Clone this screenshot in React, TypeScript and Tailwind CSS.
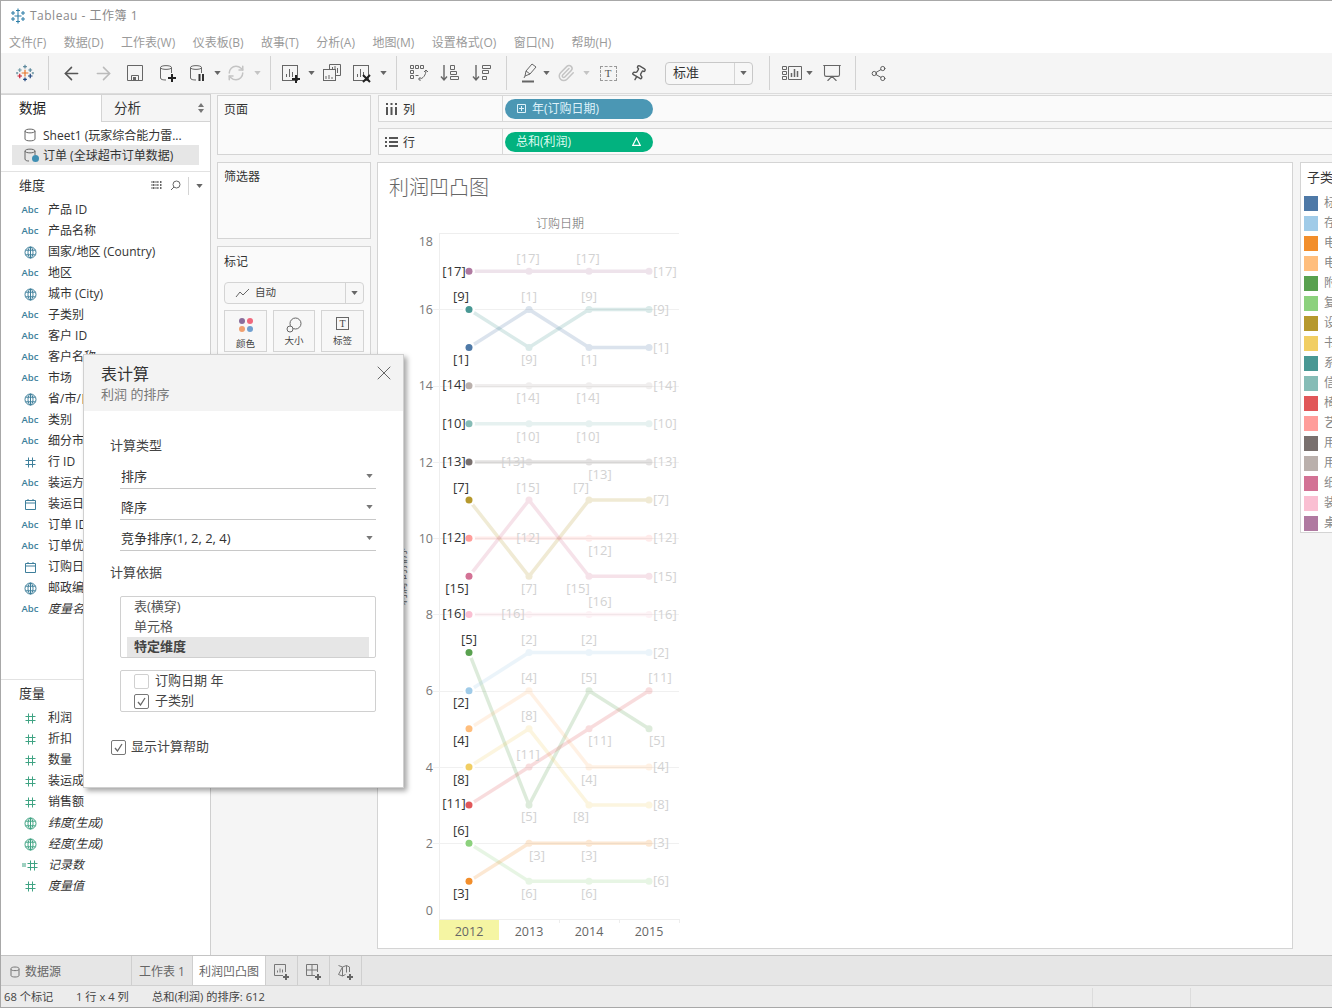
import { ArrowLeft, ArrowRight, Paperclip, Pin, Presentation, RefreshCw, Share2, X as CloseIcon } from "lucide-react"
import type { ReactNode } from "react"

const Caret = ({ color = "#666" }: { color?: string }) => (
  <svg width="7" height="4" viewBox="0 0 8 5" className="shrink-0"><path d="M0 0h8L4 5z" fill={color} /></svg>
)

const Cyl = ({ children, x = 0 }: { children?: ReactNode; x?: number }) => (
  <svg width="20" height="20" viewBox="0 0 20 20" fill="none" style={{ marginLeft: x }}>
    <path d="M2.5 4.5C2.5 2 13.5 2 13.5 4.5V10M2.5 4.5C2.5 7 13.5 7 13.5 4.5M2.5 4.5V15C2.5 16.5 5 17 8 17" stroke="#666" />
    {children}
  </svg>
)

const BlackPlus = ({ x, y }: { x: number; y: number }) => (
  <path d={`M${x - 4} ${y}h8M${x} ${y - 4}v8`} stroke="#222" strokeWidth="2" />
)

const Sheet = ({ children }: { children?: ReactNode }) => (
  <svg width="22" height="22" viewBox="0 0 22 22" fill="none" className="shrink-0">
    <rect x="2.5" y="3.5" width="15" height="15" stroke="#666" />
    <path d="M6.5 15v-3M9.5 15V7M12.5 15v-5" stroke="#666" />
    {children}
  </svg>
)

const TableauLogo = () => {
  const crosses: [number, number, number, string][] = [
    [12, 12, 4.5, "#e8762b"],
    [12, 3.5, 2.5, "#5b879b"],
    [12, 20.5, 2.5, "#1f447e"],
    [5, 8, 2.5, "#7099a6"],
    [19, 8, 2.5, "#59879b"],
    [5, 16, 3, "#c72035"],
    [19, 16, 3, "#1f447e"],
    [1.5, 12, 1.5, "#7099a6"],
    [22.5, 12, 1.5, "#7099a6"],
  ]
  return (
    <svg width="18" height="18" viewBox="0 0 24 24">
      {crosses.map(([x, y, s, c]) => (
        <path key={`${x}-${y}`} d={`M${x - s} ${y}h${2 * s}M${x} ${y - s}v${2 * s}`} stroke={c} strokeWidth="1.6" />
      ))}
    </svg>
  )
}

const TitleLogo = () => {
  const pts = [[8, 8, 3.5], [8, 2.5, 2], [8, 13.5, 2], [3, 5, 2], [13, 5, 2], [3, 11, 2], [13, 11, 2]]
  return (
    <svg width="16" height="16" viewBox="0 0 16 16">
      {pts.map(([x, y, s]) => (
        <path key={`${x}-${y}`} d={`M${x - s} ${y}h${2 * s}M${x} ${y - s}v${2 * s}`} stroke="#2f7fa8" strokeWidth="1.1" />
      ))}
    </svg>
  )
}

// toolbar cell, width is what keeps the icons on their columns
const Cell = ({ w, children }: { w: string; children: ReactNode }) => (
  <div className={`${w} h-full flex items-center justify-center shrink-0`}>{children}</div>
)

const Sep = () => <div className="w-px h-[34px] bg-[#d2d2d2] shrink-0" />

function Toolbar() {
  return (
    <div className="h-[41px] bg-[#f5f5f5] border-b border-[#dcdcdc] flex items-center shrink-0">
      <Cell w="w-[47px]"><TableauLogo /></Cell>
      <Sep />
      <div className="w-[6px]" />
      <Cell w="w-[32px]"><ArrowLeft size={21} color="#555" strokeWidth={1.8} /></Cell>
      <Cell w="w-[32px]"><ArrowRight size={21} color="#bbb" strokeWidth={1.8} /></Cell>
      <Cell w="w-[32px]">
        <svg width="18" height="18" viewBox="0 0 18 18" fill="none">
          <path d="M1.5 1.5h15v15h-15zM5.5 16.5v-5h7v5" stroke="#666" />
          <rect x="7" y="13" width="3" height="3" fill="#666" />
        </svg>
      </Cell>
      <Cell w="w-[32px]"><Cyl x={2}><BlackPlus x={14} y={15} /></Cyl></Cell>
      <Cell w="w-[28px]"><Cyl x={2}><path d="M11.5 11v7M15 11v7" stroke="#333" strokeWidth="2" /></Cyl></Cell>
      <Cell w="w-[12px]"><Caret /></Cell>
      <Cell w="w-[26px]"><RefreshCw size={18} color="#c4c4c4" /></Cell>
      <Cell w="w-[16px]"><Caret color="#c4c4c4" /></Cell>
      <div className="w-[5px]" />
      <Sep />
      <Cell w="w-[40px]"><Sheet><BlackPlus x={16} y={17} /></Sheet></Cell>
      <Cell w="w-[0px]"><Caret /></Cell>
      <Cell w="w-[42px]">
        <svg width="20" height="20" viewBox="0 0 20 20" fill="none">
          <path d="M7.5 6V1.5h11v11H14" stroke="#666" />
          <rect x="1.5" y="6.5" width="12" height="11" stroke="#666" fill="#f5f5f5" />
          <path d="M10.5 4v2M13 3v3M15.5 5v5M4 16v-3M7 16v-4M10 16v-2" stroke="#666" />
        </svg>
      </Cell>
      <Cell w="w-[18px]"><Sheet><path d="M12 13l7 7M19 13l-7 7" stroke="#222" strokeWidth="2" /></Sheet></Cell>
      <Cell w="w-[24px]"><Caret /></Cell>
      <div className="w-px" />
      <Sep />
      <Cell w="w-[42px]">
        <svg width="20" height="20" viewBox="0 0 20 20" fill="none" stroke="#666">
          <path d="M2.5 2.5h3v3h-3zM7.5 2.5h3v3h-3zM12.5 2.5h3v3h-3zM2.5 7.5h3v3h-3zM2.5 12.5h3v3h-3zM7.5 12.5h3" />
          <path d="M18 7c0 5-3 9-7 9M16 9l2-2 2 2M12.5 14l-2 2 2 2" />
        </svg>
      </Cell>
      <Cell w="w-[22px]">
        <svg width="20" height="20" viewBox="0 0 20 20" fill="none" stroke="#666">
          <path d="M4 2v15M1 13.5l3 3.5 3-3.5" strokeWidth="1.4" />
          <path d="M10.5 2.5h4v4h-4zM10.5 8.5h6v3h-6zM10.5 13.5h8v3h-8z" />
        </svg>
      </Cell>
      <div className="w-[10px]" />
      <Cell w="w-[22px]">
        <svg width="20" height="20" viewBox="0 0 20 20" fill="none" stroke="#666">
          <path d="M4 2v15M1 13.5l3 3.5 3-3.5" strokeWidth="1.4" />
          <path d="M10.5 2.5h8v3h-8zM10.5 7.5h6v3h-6zM10.5 13.5h4v3h-4z" />
        </svg>
      </Cell>
      <div className="w-[13px]" />
      <Sep />
      <div className="w-[7px]" />
      <Cell w="w-[30px]">
        <svg width="20" height="22" viewBox="0 0 20 22" fill="none">
          <path d="M6 14l1-5 6-7 4 3-6 7z M7 9l4 3 M6 14l-1 2" stroke="#666" />
          <path d="M3 19.5h12" stroke="#666" strokeWidth="2" />
        </svg>
      </Cell>
      <Cell w="w-[4px]"><Caret /></Cell>
      <Cell w="w-[36px]"><Paperclip size={18} color="#c4c4c4" /></Cell>
      <Cell w="w-[4px]"><Caret color="#c4c4c4" /></Cell>
      <Cell w="w-[40px]">
        <div className="w-[17px] h-[15px] border border-dashed border-[#999] flex items-center justify-center text-[11px] leading-none text-[#555] font-['Liberation_Serif',serif]">T</div>
      </Cell>
      <Cell w="w-[20px]"><Pin size={17} color="#555" className="rotate-[30deg]" /></Cell>
      <div className="w-[17px]" />
      <div className="w-[88px] h-[23px] border border-[#c8c8c8] rounded-sm flex items-center bg-[#f7f7f7] shrink-0">
        <span className="flex-1 pl-[7px] text-[13px] text-[#333]">标准</span>
        <div className="w-[18px] h-full border-l border-[#d4d4d4] flex items-center justify-center"><Caret /></div>
      </div>
      <div className="w-[16px]" />
      <Sep />
      <div className="w-[6px]" />
      <Cell w="w-[32px]">
        <svg width="20" height="16" viewBox="0 0 20 16" fill="none" stroke="#666">
          <path d="M.5 1.5h4v3h-4zM.5 6.5h4v3h-4zM.5 11.5h4v3h-4zM6.5 1.5h13v13h-13z" />
          <path d="M9.5 12V8M12.5 12V4M15.5 12V6" strokeWidth="1.5" />
        </svg>
      </Cell>
      <Cell w="w-[2px]"><Caret /></Cell>
      <Cell w="w-[44px]"><Presentation size={20} color="#666" strokeWidth={1.3} /></Cell>
      <div className="w-px" />
      <Sep />
      <Cell w="w-[44px]"><Share2 size={17} color="#555" strokeWidth={1.3} /></Cell>
    </div>
  )
}

const Globe = ({ color }: { color: string }) => (
  <svg width="13" height="13" viewBox="0 0 13 13" fill="none" stroke={color}>
    <circle cx="6.5" cy="6.5" r="5.5" />
    <ellipse cx="6.5" cy="6.5" rx="2.5" ry="5.5" />
    <path d="M1.5 4.2h10M1.5 8.8h10M6.5 1v11" />
  </svg>
)

const Hash = ({ color }: { color: string }) => (
  <svg width="11" height="11" viewBox="0 0 11 11" fill="none" stroke={color}>
    <path d="M3.5 .5v10M7.5 .5v10M.5 3.5h10M.5 7.5h10" />
  </svg>
)

const Cal = () => (
  <svg width="11" height="11" viewBox="0 0 11 11" fill="none" stroke="#3e7f9b">
    <path d="M.5 1.5h10v9H.5zM.5 4h10M3 0v2M8 0v2" />
  </svg>
)

type Kind = "abc" | "globe" | "hash" | "cal"

const dims: [Kind, string, boolean?][] = [
  ["abc", "产品 ID"],
  ["abc", "产品名称"],
  ["globe", "国家/地区 (Country)"],
  ["abc", "地区"],
  ["globe", "城市 (City)"],
  ["abc", "子类别"],
  ["abc", "客户 ID"],
  ["abc", "客户名称"],
  ["abc", "市场"],
  ["globe", "省/市/自治区"],
  ["abc", "类别"],
  ["abc", "细分市场"],
  ["hash", "行 ID"],
  ["abc", "装运方式"],
  ["cal", "装运日期"],
  ["abc", "订单 ID"],
  ["abc", "订单优先级"],
  ["cal", "订购日期"],
  ["globe", "邮政编码"],
  ["abc", "度量名称", true],
]

const measures: ["hash" | "globe" | "count", string, boolean?][] = [
  ["hash", "利润"],
  ["hash", "折扣"],
  ["hash", "数量"],
  ["hash", "装运成本"],
  ["hash", "销售额"],
  ["globe", "纬度(生成)", true],
  ["globe", "经度(生成)", true],
  ["count", "记录数", true],
  ["hash", "度量值", true],
]

const Field = ({ icon, name, italic }: { icon: ReactNode; name: string; italic?: boolean }) => (
  <div className="h-[21px] flex items-center pl-[17px] pt-px shrink-0">
    <div className="w-[24px] flex justify-center mr-[6px]">{icon}</div>
    <span className={`text-[12px] text-[#333] whitespace-nowrap ${italic ? "italic" : ""}`}>{name}</span>
  </div>
)

function DataPanel() {
  return (
    <div className="w-[210px] bg-white border-r border-[#cfcfcf] flex flex-col shrink-0">
      <div className="h-[28px] flex shrink-0">
        <div className="w-[101px] border-t border-r border-[#d4d4d4] flex items-center pl-[18px] text-[13.5px] text-[#222]">数据</div>
        <div className="flex-1 bg-[#f5f5f5] border-t border-b border-[#d4d4d4] flex items-center pl-[12px] text-[13.5px] text-[#333] relative">
          分析
          <div className="ml-auto mr-[6px] flex flex-col gap-[2px]">
            <svg width="6" height="4" viewBox="0 0 6 4"><path d="M3 0l3 4H0z" fill="#777" /></svg>
            <svg width="6" height="4" viewBox="0 0 6 4"><path d="M0 0h6L3 4z" fill="#777" /></svg>
          </div>
        </div>
      </div>
      <div className="pt-[3px] pb-[6px] border-b border-[#e2e2e2] shrink-0">
        <div className="h-[20px] flex items-center pl-[23px]">
          <svg width="12" height="14" viewBox="0 0 12 14" fill="none" stroke="#666"><path d="M1 3c0-2.500 10-2.500 10 0v8c0 2.500-10 2.500-10 0zM1 3c0 2.500 10 2.500 10 0" /></svg>
          <span className="ml-[7px] pt-[2px] text-[12px] text-[#333] whitespace-nowrap">Sheet1 (玩家综合能力雷...</span>
        </div>
        <div className="h-[20px] mx-[11px] w-[187px] bg-[#e6e6e6] flex items-center pl-[12px] relative">
          <svg width="12" height="14" viewBox="0 0 12 14" fill="none" stroke="#666"><path d="M1 3c0-2.500 10-2.500 10 0v4M1 3c0 2.500 10 2.500 10 0M1 3v8c0 1.500 2 2 4 2" /></svg>
          <div className="absolute left-[20px] top-[10px] w-[7px] h-[7px] rounded-full bg-[#3f8fb3]" />
          <span className="ml-[7px] pt-[2px] text-[12px] text-[#333] whitespace-nowrap">订单 (全球超市订单数据)</span>
        </div>
      </div>
      <div className="h-[27px] flex items-center pl-[18px] shrink-0">
        <span className="text-[13px] text-[#333]">维度</span>
        <svg className="ml-auto" width="12" height="9" viewBox="0 0 12 9" stroke="#666"><path d="M0 1h12M0 4h12M0 7h12M2.500 0v9M6 0v9M9.500 0v9" strokeDasharray="2 1" /></svg>
        <svg className="ml-[7px]" width="11" height="11" viewBox="0 0 11 11" fill="none" stroke="#666"><circle cx="6.500" cy="4.500" r="3.500" /><path d="M4 7l-3 3" /></svg>
        <div className="w-px h-[18px] bg-[#d4d4d4] ml-[7px]" />
        <div className="mx-[7px] flex"><Caret /></div>
      </div>
      {dims.map(([k, name, italic]) => (
        <Field
          key={name}
          name={name}
          italic={italic}
          icon={
            k === "abc" ? (
              <span className="text-[9.5px] leading-none text-[#3e7f9b] font-semibold">Abc</span>
            ) : k === "globe" ? (
              <Globe color="#3e7f9b" />
            ) : k === "hash" ? (
              <Hash color="#3e7f9b" />
            ) : (
              <Cal />
            )
          }
        />
      ))}
      <div className="h-[61px] border-b border-[#e2e2e2] shrink-0" />
      <div className="h-[27px] flex items-center pl-[18px] text-[13px] text-[#333] shrink-0">度量</div>
      {measures.map(([k, name, italic]) => (
        <Field
          key={name}
          name={name}
          italic={italic}
          icon={
            k === "globe" ? (
              <Globe color="#3fa383" />
            ) : k === "hash" ? (
              <Hash color="#3fa383" />
            ) : (
              <span className="flex items-center gap-px">
                <svg width="4" height="4" viewBox="0 0 4 4" stroke="#3fa383"><path d="M0 1h4M0 3h4" /></svg>
                <Hash color="#3fa383" />
              </span>
            )
          }
        />
      ))}
    </div>
  )
}

function MiddleColumn() {
  return (
    <div className="w-[166px] bg-[#f5f5f5] px-[6px] pt-px flex flex-col gap-[7px] shrink-0">
      <div className="h-[60px] bg-[#fafafa] border border-[#d4d4d4] px-[6px] py-[5px] text-[12px] text-[#333]">页面</div>
      <div className="h-[77px] bg-[#fafafa] border border-[#d4d4d4] px-[6px] py-[5px] text-[12px] text-[#333]">筛选器</div>
      <div className="h-[400px] bg-[#fafafa] border border-[#d4d4d4] px-[6px] pt-[6px]">
        <div className="text-[12px] text-[#333] leading-[18px]">标记</div>
        <div className="mt-[11px] h-[22px] border border-[#d4d4d4] rounded-sm bg-[#f7f7f7] flex items-center">
          <svg className="ml-[10px]" width="15" height="10" viewBox="0 0 15 10" fill="none" stroke="#666"><path d="M1 9l4-5 3 3 6-6" /></svg>
          <span className="ml-[5px] flex-1 text-[10.5px] text-[#444]">自动</span>
          <div className="w-[18px] h-full border-l border-[#d4d4d4] flex items-center justify-center"><Caret /></div>
        </div>
        <div className="mt-[6px] flex justify-between">
          <div className="w-[43px] h-[42px] border border-[#d4d4d4] bg-[#f7f7f7] flex flex-col items-center pt-[7px]">
            <div className="grid grid-cols-2 gap-[2px]">
              <div className="w-[6px] h-[6px] rounded-full bg-[#8a6d9b]" />
              <div className="w-[6px] h-[6px] rounded-full bg-[#f0687c]" />
              <div className="w-[6px] h-[6px] rounded-full bg-[#f0a070]" />
              <div className="w-[6px] h-[6px] rounded-full bg-[#6f9fd0]" />
            </div>
            <span className="mt-[6px] text-[9.5px] leading-[12px] text-[#444]">颜色</span>
          </div>
          <div className="w-[42px] h-[42px] border border-[#d4d4d4] bg-[#f7f7f7] flex flex-col items-center pt-[6px]">
            <svg width="16" height="16" viewBox="0 0 16 16" fill="none" stroke="#666"><circle cx="9.500" cy="6.500" r="5.500" fill="#f7f7f7" /><circle cx="4" cy="12" r="3" fill="#f7f7f7" /></svg>
            <span className="mt-[2px] text-[9.5px] leading-[12px] text-[#444]">大小</span>
          </div>
          <div className="w-[43px] h-[42px] border border-[#d4d4d4] bg-[#f7f7f7] flex flex-col items-center pt-[6px]">
            <div className="w-[13px] h-[13px] border border-[#666] flex items-center justify-center text-[10px] leading-none text-[#444] font-['Liberation_Serif',serif]">T</div>
            <span className="mt-[5px] text-[9.5px] leading-[12px] text-[#444]">标签</span>
          </div>
        </div>
      </div>
    </div>
  )
}

// ------- chart data: ranks per year, label centre per year
type P = [number, number]
type Series = { n: number; color: string; v: number[]; l: P[] }

const R = 665
const S = 661
const series: Series[] = [
  { n: 17, color: "#b07aa1", v: [17, 17, 17, 17], l: [[454, 272], [528, 259], [588, 259], [R, 272]] },
  { n: 9, color: "#499894", v: [16, 15, 16, 16], l: [[461, 297], [529, 360], [589, 297], [S, 310]] },
  { n: 1, color: "#4e79a7", v: [15, 16, 15, 15], l: [[461, 360], [529, 297], [589, 360], [S, 348]] },
  { n: 14, color: "#bab0ac", v: [14, 14, 14, 14], l: [[454, 385], [528, 398], [588, 398], [R, 386]] },
  { n: 10, color: "#86bcb6", v: [13, 13, 13, 13], l: [[454, 424], [528, 437], [588, 437], [R, 424]] },
  { n: 13, color: "#79706e", v: [12, 12, 12, 12], l: [[454, 462], [513, 462], [600, 475], [R, 462]] },
  { n: 7, color: "#b6992d", v: [11, 9, 11, 11], l: [[461, 488], [529, 589], [581, 488], [S, 500]] },
  { n: 12, color: "#ff9d9a", v: [10, 10, 10, 10], l: [[454, 538], [528, 538], [600, 551], [R, 538]] },
  { n: 15, color: "#d37295", v: [9, 11, 9, 9], l: [[457, 589], [528, 488], [578, 589], [R, 577]] },
  { n: 16, color: "#fabfd2", v: [8, 8, 8, 8], l: [[454, 614], [513, 614], [600, 602], [R, 615]] },
  { n: 5, color: "#59a14f", v: [7, 3, 6, 5], l: [[469, 640], [529, 817], [589, 678], [657, 741]] },
  { n: 2, color: "#a0cbe8", v: [6, 7, 7, 7], l: [[461, 703], [529, 640], [589, 640], [S, 653]] },
  { n: 4, color: "#ffbe7d", v: [5, 6, 4, 4], l: [[461, 741], [529, 678], [589, 780], [S, 767]] },
  { n: 8, color: "#f1ce63", v: [4, 5, 3, 3], l: [[461, 780], [529, 716], [581, 817], [S, 805]] },
  { n: 11, color: "#e15759", v: [3, 4, 5, 6], l: [[454, 804], [528, 755], [600, 741], [660, 678]] },
  { n: 6, color: "#8cd17d", v: [2, 1, 1, 1], l: [[461, 831], [529, 894], [589, 894], [S, 881]] },
  { n: 3, color: "#f28e2b", v: [1, 2, 2, 2], l: [[461, 894], [537, 856], [589, 856], [S, 843]] },
]

const COLS = [469, 529, 589, 649]
const yOf = (v: number) => 919.5 - v * 38.13

function Chart() {
  const ticks: [number, number][] = [[18, 241], [16, 309], [14, 385], [12, 462], [10, 538], [8, 614], [6, 690], [4, 767], [2, 843], [0, 910]]
  return (
    <svg width="914" height="735" viewBox="378 213 914 735" className="block">
      <text x="560" y="223" textAnchor="middle" dominantBaseline="central" fontSize="12" fontWeight="300" fill="#666">订购日期</text>
      <text transform="translate(401 576) rotate(-90)" textAnchor="middle" dominantBaseline="central" fontSize="11" fill="#666">利润 的排序</text>
      <path d="M439.500 233v686M439 233.500h240M439 919.500h240M559.500 919v4M619.500 919v4M679.500 919v4" stroke="#eeeeee" fill="none" />
      {[16, 14, 12, 10, 8, 6, 4, 2].map((v) => (
        <path key={v} d={`M433 ${Math.round(yOf(v)) + 0.5}H679`} stroke="#f0f0f0" />
      ))}
      {ticks.map(([v, y]) => (
        <text key={v} x="433" y={y} textAnchor="end" dominantBaseline="central" fontSize="12.5" fill="#777">{v}</text>
      ))}
      <rect x="439" y="920" width="60" height="20" fill="#f5f5a3" />
      {[2012, 2013, 2014, 2015].map((t, i) => (
        <text key={t} x={COLS[i]} y="931" textAnchor="middle" dominantBaseline="central" fontSize="12.5" fill="#666">{t}</text>
      ))}
      {series.map((s) => (
        <g key={s.n} opacity="0.2">
          <polyline points={s.v.map((v, i) => `${COLS[i]},${yOf(v)}`).join(" ")} fill="none" stroke={s.color} strokeWidth="3.5" />
          {s.v.map((v, i) => (
            <circle key={i} cx={COLS[i]} cy={yOf(v)} r="3.500" fill={s.color} />
          ))}
        </g>
      ))}
      {series.map((s) => (
        <g key={s.n}>
          <circle cx={COLS[0]} cy={yOf(s.v[0])} r="6" fill="#fff" />
          <circle cx={COLS[0]} cy={yOf(s.v[0])} r="3.500" fill={s.color} />
        </g>
      ))}
      {series.map((s) =>
        s.l.map(([x, y], i) => (
          <text key={`${s.n}-${i}`} x={x} y={y - 1} textAnchor="middle" dominantBaseline="central" fontSize="13" fill={i === 0 ? "#333" : "#d2d2d2"}>
            [{s.n}]
          </text>
        ))
      )}
    </svg>
  )
}

const legend: [string, string][] = [
  ["#4e79a7", "标签"],
  ["#a0cbe8", "存储"],
  ["#f28e2b", "电话"],
  ["#ffbe7d", "电器"],
  ["#59a14f", "附件"],
  ["#8cd17d", "复印机"],
  ["#b6992d", "设备"],
  ["#f1ce63", "书架"],
  ["#499894", "系固件"],
  ["#86bcb6", "信封"],
  ["#e15759", "椅子"],
  ["#ff9d9a", "艺术"],
  ["#79706e", "用品"],
  ["#bab0ac", "用具"],
  ["#d37295", "纸张"],
  ["#fabfd2", "装订机"],
  ["#b07aa1", "桌子"],
]

function Legend() {
  return (
    <div className="ml-[7px] h-[371px] flex-1 bg-white border border-r-0 border-[#d4d4d4] overflow-hidden pl-[3px]">
      <div className="h-[30px] flex items-center pl-[3px] text-[13px] text-[#333] whitespace-nowrap">子类别</div>
      <div className="flex flex-col">
        {legend.map(([c, name]) => (
          <div key={c} className="h-[20px] flex items-center whitespace-nowrap">
            <div className="w-[14px] h-[15px] shrink-0" style={{ backgroundColor: c }} />
            <span className="ml-[6px] text-[12px] text-[#888]">{name}</span>
          </div>
        ))}
      </div>
    </div>
  )
}

const Shelf = ({ icon, label, children }: { icon: ReactNode; label: string; children: ReactNode }) => (
  <div className="h-[27px] ml-px bg-[#fafafa] border border-r-0 border-[#d8d8d8] flex items-center shrink-0">
    <div className="w-[124px] h-full flex items-center border-r border-[#d8d8d8] shrink-0">
      <div className="w-[24px] flex justify-center">{icon}</div>
      <span className="pt-[2px] text-[12px] text-[#333]">{label}</span>
    </div>
    <div className="pl-[2px]">{children}</div>
  </div>
)

function Main() {
  return (
    <div className="flex-1 min-w-0 bg-[#f5f5f5] pt-px flex flex-col gap-[6px]">
      <Shelf
        label="列"
        icon={<svg width="11" height="12" viewBox="0 0 11 12" fill="#555"><path d="M0 0h2v2H0zM4.500 0h2v2h-2zM9 0h2v2H9zM0 4h2v8H0zM4.500 4h2v8h-2zM9 4h2v8H9z" /></svg>}
      >
        <div className="w-[148px] h-[20px] rounded-full bg-[#4b97b4] flex items-center pl-[12px] text-[12px] text-[#dff2fa]">
          <svg width="9" height="9" viewBox="0 0 9 9" fill="none" stroke="#dff2fa"><path d="M.5.500h8v8h-8zM4.500 2v5M2 4.500h5" /></svg>
          <span className="ml-[6px]">年(订购日期)</span>
        </div>
      </Shelf>
      <Shelf
        label="行"
        icon={<svg width="13" height="10" viewBox="0 0 13 10" fill="#555"><path d="M0 0h2v2H0zM0 4h2v2H0zM0 8h2v2H0zM4 0h9v2H4zM4 4h9v2H4zM4 8h9v2H4z" /></svg>}
      >
        <div className="w-[148px] h-[20px] rounded-full bg-[#02b27f] flex items-center pl-[11px] pr-[12px] text-[12px] text-[#dcfbf0]">
          <span className="flex-1">总和(利润)</span>
          <svg width="9" height="9" viewBox="0 0 9 9" fill="none" stroke="#fff" strokeWidth="1.200"><path d="M4.500 1L8.300 8.400H.700z" /></svg>
        </div>
      </Shelf>
      <div className="flex mt-px items-start">
        <div className="w-[916px] h-[787px] bg-white border border-[#d4d4d4] shrink-0 overflow-hidden">
          <div className="h-[50px] pl-[11px] flex items-center text-[20px] font-light text-[#666]">利润凹凸图</div>
          <Chart />
        </div>
        <Legend />
      </div>
    </div>
  )
}

const Select = ({ label }: { label: string }) => (
  <div className="ml-[10px] w-[256px] h-[24px] border-b border-[#c8c8c8] flex items-center">
    <span className="flex-1 pl-px text-[13px] text-[#333]">{label}</span>
    <div className="mr-[3px] flex pb-[2px]"><Caret color="#777" /></div>
  </div>
)

const Check = ({ on }: { on: boolean }) => (
  <div className={`w-[15px] h-[15px] border rounded-[2px] flex items-center justify-center shrink-0 ${on ? "border-[#777]" : "border-[#d0d0d0]"}`}>
    {on && <svg width="9" height="9" viewBox="0 0 9 9" fill="none" stroke="#666" strokeWidth="1.300"><path d="M1 5l2.500 3L8 1" /></svg>}
  </div>
)

function CalcDialog() {
  return (
    <div className="absolute left-[82px] top-[353px] w-[321px] h-[434px] bg-white border border-[#d0d0d0] shadow-[3px_3px_5px_rgba(0,0,0,0.35)] z-10">
      <div className="h-[56px] bg-[#f3f3f3] pl-[17px] pt-[9px] relative">
        <div className="text-[16px] leading-[20px] text-[#333]">表计算</div>
        <div className="mt-px text-[13px] leading-[18px] text-[#777]">利润 的排序</div>
        <CloseIcon size={24} strokeWidth={0.9} color="#555" className="absolute right-[7px] top-[6px]" />
      </div>
      <div className="pl-[26px] pt-[25px] text-[13px] leading-[18px] text-[#444]">计算类型</div>
      <div className="mt-[11px] flex flex-col gap-[7px] pl-[26px]">
        <Select label="排序" />
        <Select label="降序" />
        <Select label="竞争排序(1, 2, 2, 4)" />
      </div>
      <div className="pl-[26px] mt-[12px] text-[13px] leading-[18px] text-[#444]">计算依据</div>
      <div className="ml-[36px] w-[256px] h-[62px] mt-[15px] border border-[#d0d0d0] rounded-[2px]">
        <div className="h-[20px] pl-[13px] flex items-center text-[13px] text-[#555]">表(横穿)</div>
        <div className="h-[20px] pl-[13px] flex items-center text-[13px] text-[#555]">单元格</div>
        <div className="h-[20px] mx-[6px] pl-[7px] bg-[#e6e6e6] flex items-center text-[13px] font-bold text-[#444]">特定维度</div>
      </div>
      <div className="ml-[36px] w-[256px] h-[42px] mt-[12px] border border-[#d0d0d0] rounded-[2px]">
        <div className="h-[20px] pl-[13px] flex items-center gap-[6px] text-[13px] text-[#444]"><Check on={false} />订购日期 年</div>
        <div className="h-[20px] pl-[13px] flex items-center gap-[6px] text-[13px] text-[#444]"><Check on />子类别</div>
      </div>
      <div className="ml-[27px] mt-[25px] h-[20px] flex items-center gap-[5px] text-[13px] text-[#444]"><Check on />显示计算帮助</div>
    </div>
  )
}

const TabIcon = ({ children }: { children: ReactNode }) => (
  <div className="w-[32px] h-full border-r border-[#cfcfcf] pt-[2px] flex items-center justify-center">{children}</div>
)

export default function App() {
  const menu = ["文件(F)", "数据(D)", "工作表(W)", "仪表板(B)", "故事(T)", "分析(A)", "地图(M)", "设置格式(O)", "窗口(N)", "帮助(H)"]
  return (
    <div className="relative w-[1332px] h-[1008px] overflow-hidden flex flex-col bg-white border-t border-l border-b border-[#a8a8a8] font-['Open_Sans','Noto_Sans_CJK_SC',sans-serif]">
      <div className="h-[27px] flex items-center pl-[9px] pt-[2px] shrink-0">
        <TitleLogo />
        <span className="ml-[4px] text-[12px] tracking-[0.5px] text-[#8a8a8a]">Tableau - 工作簿 1</span>
      </div>
      <div className="h-[25px] flex items-center gap-[17.5px] pl-[8px] pt-[4px] shrink-0">
        {menu.map((m) => (
          <span key={m} className="text-[12px] text-[#9a9a9a]">{m}</span>
        ))}
      </div>
      <Toolbar />
      <div className="flex-1 min-h-0 flex border-b border-[#c4c4c4]">
        <DataPanel />
        <MiddleColumn />
        <Main />
      </div>
      <div className="h-[30px] bg-[#e6e6e6] border-b border-[#d0d0d0] flex shrink-0">
        <div className="w-[131px] h-full border-r border-[#cfcfcf] pt-[3px] flex items-center pl-[9px] text-[12px] text-[#666]">
          <svg width="10" height="12" viewBox="0 0 10 12" fill="none" stroke="#777"><path d="M1 2.500c0-2 8-2 8 0v7c0 2-8 2-8 0zM1 3.500c0 1.500 8 1.500 8 0" /></svg>
          <span className="ml-[5px]">数据源</span>
        </div>
        <div className="w-[61px] h-full border-r border-[#cfcfcf] pt-[3px] flex items-center justify-center text-[12px] text-[#666] whitespace-nowrap">工作表 1</div>
        <div className="w-[73px] h-full bg-white border-r border-[#cfcfcf] pt-[3px] flex items-center justify-center text-[12px] text-[#666] whitespace-nowrap">利润凹凸图</div>
        <TabIcon>
          <svg width="16" height="16" viewBox="0 0 16 16" fill="none" stroke="#777"><path d="M9 11.500H.5V.500h11V8M3.500 8.500v-2M6 8.500v-4M8.500 8.500v-3" /><path d="M12 10v6M9 13h6" stroke="#666" strokeWidth="2" /></svg>
        </TabIcon>
        <TabIcon>
          <svg width="16" height="16" viewBox="0 0 16 16" fill="none" stroke="#777"><path d="M9 11.500H.5V.500h11V8M.5 6h11M6 .500v11" /><path d="M12 10v6M9 13h6" stroke="#666" strokeWidth="2" /></svg>
        </TabIcon>
        <TabIcon>
          <svg width="16" height="16" viewBox="0 0 16 16" fill="none" stroke="#777"><path d="M.5 1.500l4 1.500 4-1.500 3 1.500v5M4.500 3v9l-4-1.500zM4.500 12l3-1.500M8.500 1.500v7" /><path d="M12 10v6M9 13h6" stroke="#666" strokeWidth="2" /></svg>
        </TabIcon>
      </div>
      <div className="h-[21px] bg-[#ececec] flex items-center pl-[3px] pt-[2px] text-[11.2px] text-[#444] shrink-0">
        <span className="w-[72px]">68 个标记</span>
        <span className="w-[76px]">1 行 x 4 列</span>
        <span>总和(利润) 的排序: 612</span>
        <div className="ml-auto w-px h-full bg-[#dcdcdc]" />
        <div className="w-[97px]" />
        <div className="w-px h-full bg-[#dcdcdc]" />
        <div className="w-[141px]" />
      </div>
      <CalcDialog />
    </div>
  )
}
